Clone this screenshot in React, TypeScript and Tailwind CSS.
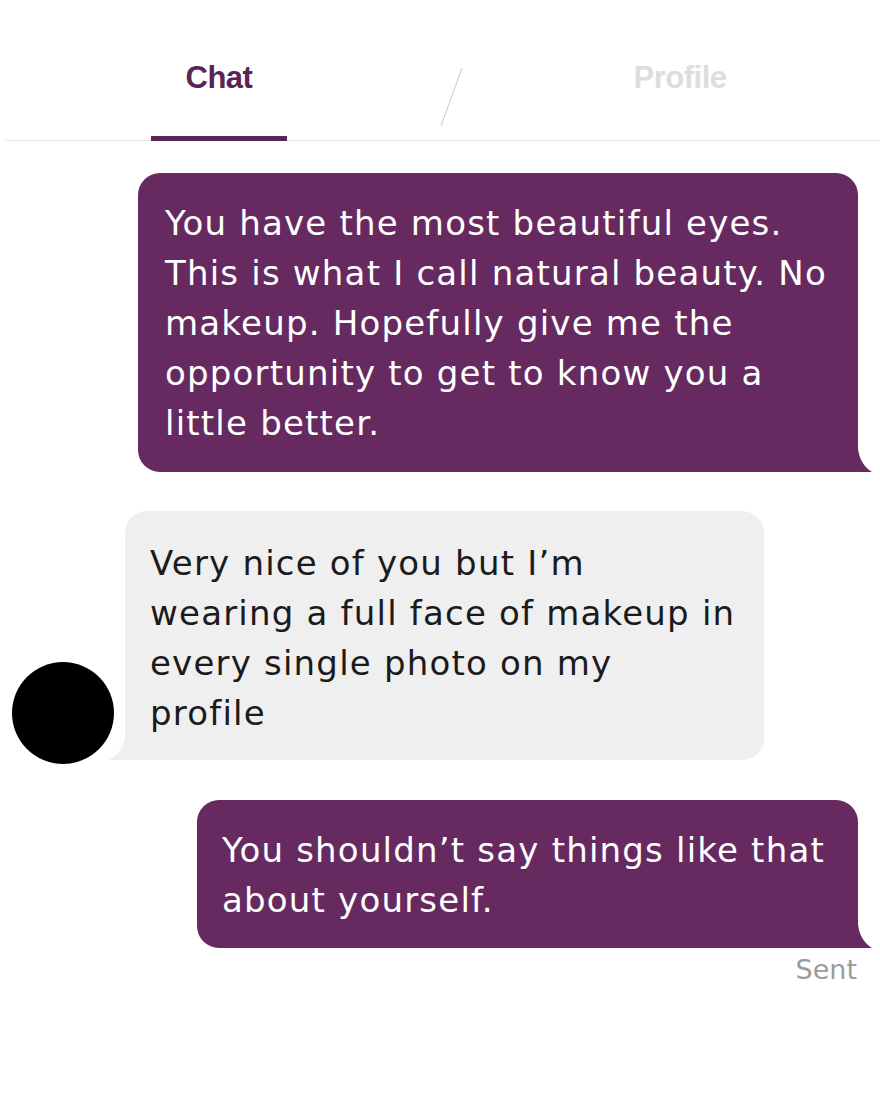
import React from "react";

const PURPLE = "#662a60";

function TailRight({ color }: { color: string }) {
  return (
    <svg
      className="absolute bottom-0 right-[-15px]"
      width="16"
      height="24"
      viewBox="0 0 16 24"
    >
      <path d="M0 0 L1 0 C2 10 6 18 15 24 L0 24 Z" fill={color} />
    </svg>
  );
}

function TailLeft({ color }: { color: string }) {
  return (
    <svg
      className="absolute bottom-0 left-[-17px]"
      width="18"
      height="24"
      viewBox="0 0 18 24"
    >
      <path d="M18 0 L17 0 C16 10 12 18 1 24 L18 24 Z" fill={color} />
    </svg>
  );
}

function Lines({ lines }: { lines: string[] }) {
  return (
    <>
      {lines.map((l, i) => (
        <div key={i} className="whitespace-nowrap">
          {l}
        </div>
      ))}
    </>
  );
}

const BODY_FONT = "'DejaVu Sans', Verdana, sans-serif";

export default function App() {
  return (
    <div className="w-[880px] h-[1100px] bg-white overflow-hidden">
      {/* Header */}
      <div className="relative h-[141px] border-b border-[#e4e4e4] ml-[5px]">
        <div className="flex h-full -ml-[5px]">
          <div className="w-[438px] relative flex justify-center">
            <span
              className="mt-[58px] text-[31px] font-bold leading-[40px] text-[#5b2457] tracking-[-0.5px]"
              style={{ fontFamily: "'Liberation Sans', Arial, sans-serif" }}
            >
              Chat
            </span>
            <div className="absolute bottom-[-1px] left-[151px] w-[136px] h-[5px] bg-[#5b2457]" />
          </div>
          <div className="w-[42px] relative">
            <svg className="absolute left-0 top-[66px]" width="30" height="62" viewBox="0 0 30 62">
              <line x1="24" y1="2" x2="3" y2="60" stroke="#c8c8c8" strokeWidth="1" />
            </svg>
          </div>
          <div className="flex-1 flex justify-center">
            <span
              className="mt-[58px] text-[31px] font-bold leading-[40px] text-[#dddddd] tracking-[-0.5px]"
              style={{ fontFamily: "'Liberation Sans', Arial, sans-serif" }}
            >
              Profile
            </span>
          </div>
        </div>
      </div>

      {/* Messages */}
      <div className="flex flex-col pt-[32px]" style={{ fontFamily: BODY_FONT }}>
        <div className="flex justify-end pr-[22px]">
          <div
            className="relative w-[720px] rounded-[22px] rounded-br-none pl-[27px] pr-[20px] pt-[25px] pb-[24px] text-white text-[34px] leading-[50px] tracking-[1.2px]"
            style={{ backgroundColor: PURPLE }}
          >
            <Lines
              lines={[
                "You have the most beautiful eyes.",
                "This is what I call natural beauty. No",
                "makeup. Hopefully give me the",
                "opportunity to get to know you a",
                "little better.",
              ]}
            />
            <TailRight color={PURPLE} />
          </div>
        </div>

        <div className="flex items-end mt-[39px]">
          <div className="relative z-10 ml-[12px] w-[102px] h-[102px] rounded-full bg-black mb-[-4px]" />
          <div className="relative ml-[11px] w-[639px] rounded-[22px] rounded-bl-none bg-[#efefef] pl-[25px] pr-[20px] pt-[27px] pb-[22px] text-[#1b1b1b] text-[34px] leading-[50px] tracking-[1.2px]">
            <Lines
              lines={[
                "Very nice of you but I’m",
                "wearing a full face of makeup in",
                "every single photo on my",
                "profile",
              ]}
            />
            <TailLeft color="#efefef" />
          </div>
        </div>

        <div className="flex justify-end pr-[22px] mt-[40px]">
          <div
            className="relative w-[661px] rounded-[22px] rounded-br-none pl-[25px] pr-[20px] pt-[25px] pb-[23px] text-white text-[34px] leading-[50px] tracking-[1.2px]"
            style={{ backgroundColor: PURPLE }}
          >
            <Lines lines={["You shouldn’t say things like that", "about yourself."]} />
            <TailRight color={PURPLE} />
          </div>
        </div>

        <div className="flex justify-end pr-[23px] mt-[5px]">
          <span className="text-[27px] leading-[34px] text-[#9b9b9b]">Sent</span>
        </div>
      </div>
    </div>
  );
}
